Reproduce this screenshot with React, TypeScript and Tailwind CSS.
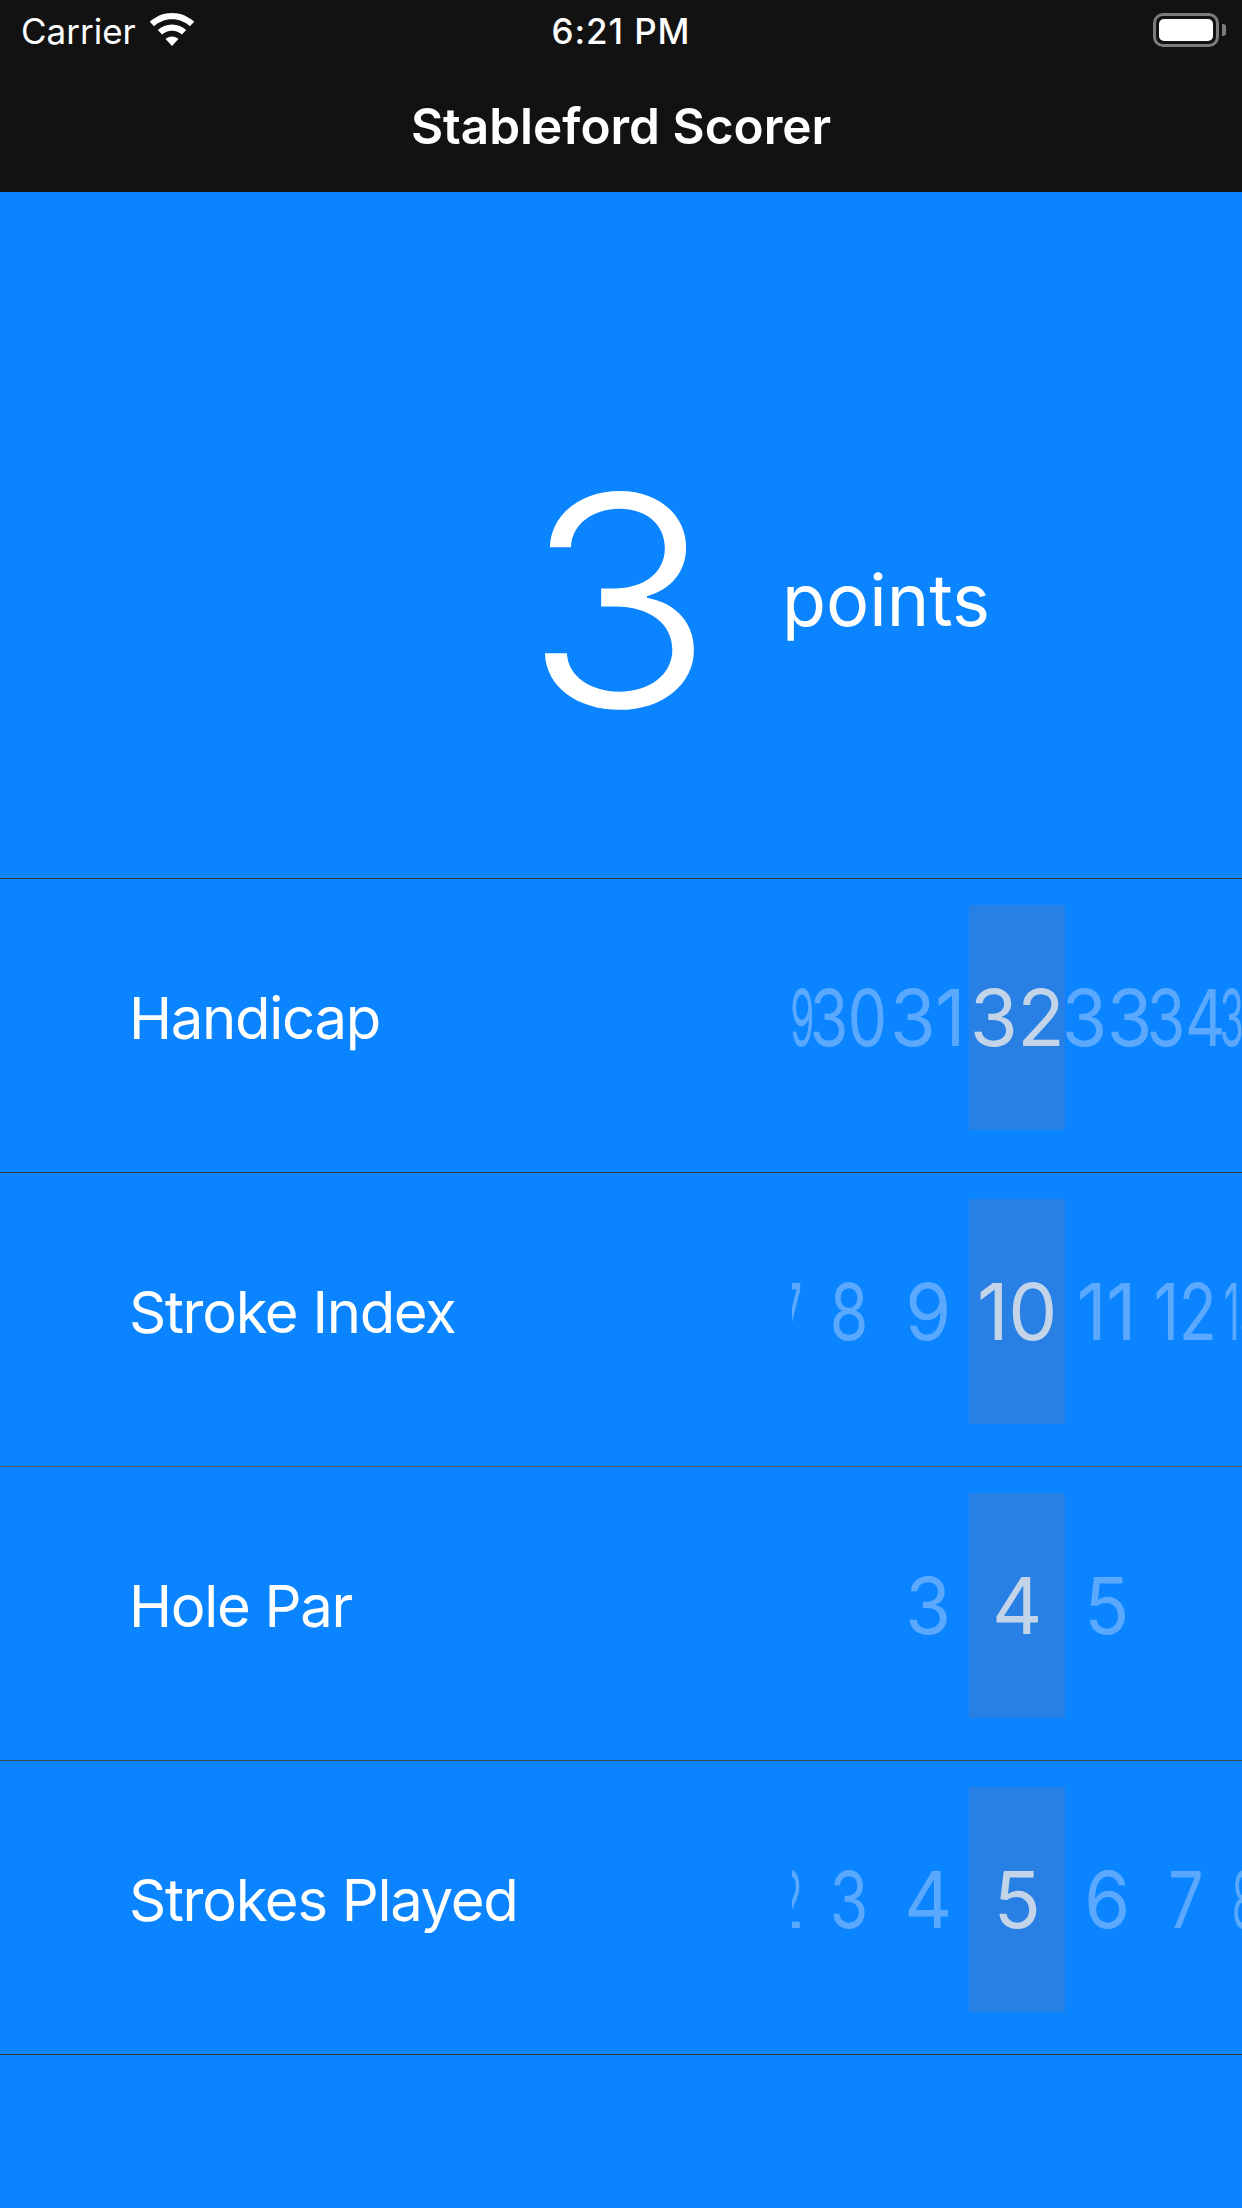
import React from "react";

function Wheel({ values }: { values: string[] }) {
  const widths = ["w-[41px]", "w-[75px]", "w-[83px]", "w-[96px]", "w-[83px]", "w-[75px]", "w-[41px]"];
  const scales = ["scale-x-[0.5]", "scale-x-[0.8]", "scale-x-[0.95]", "scale-x-100", "scale-x-[0.95]", "scale-x-[0.8]", "scale-x-[0.5]"];
  return (
    <div className="ml-auto w-[450px] overflow-hidden">
      <div className="-ml-[22px] flex items-center">
        {values.map((v, i) => (
          <div
            key={i}
            className={`${widths[i]} flex h-[225px] shrink-0 items-center justify-center ${i === 3 ? "bg-[#2880e4] text-[#c4d4e8]" : "text-[#5aa9ff]"}`}
          >
            <span className={`${scales[i]} block whitespace-nowrap text-[78px] leading-none font-normal tracking-[-0.5px]`}>{v}</span>
          </div>
        ))}
      </div>
    </div>
  );
}

function Row({ label, values, line }: { label: string; values: string[]; line: string }) {
  return (
    <div className={`flex h-[294px] items-center border-b pb-[16px] pl-[129px] ${line}`}>
      <div className="text-[58px] leading-none font-normal tracking-[-1.3px] text-white">{label}</div>
      <Wheel values={values} />
    </div>
  );
}

export default function App() {
  return (
    <div className="flex h-[2208px] w-[1242px] flex-col overflow-hidden bg-[#0a84ff] font-['Inter',sans-serif]">
      <div className="h-[192px] bg-[#121212] text-white">
        <div className="relative flex h-[60px] items-center pl-[21px] pt-[2px]">
          <span className="text-[35px] leading-none">Carrier</span>
          <svg className="ml-[13px] -mt-[3px]" width="46" height="34" viewBox="0 0 46 34" fill="#fff">
            <path d="M23 0c8.600 0 16.400 3.400 22.200 8.800l-4.300 4.500C36.300 9 30 6.300 23 6.300S9.700 9 5.100 13.300L.8 8.800C6.600 3.400 14.400 0 23 0z" />
            <path d="M23 11.500c5.500 0 10.500 2.100 14.200 5.600l-4.300 4.500C30.300 19.200 26.800 17.800 23 17.800s-7.300 1.400-9.900 3.800l-4.300-4.500c3.700-3.500 8.700-5.600 14.200-5.600z" />
            <path d="M23 23.500c2.500 0 4.700 1 6.400 2.500L23 33l-6.400-7c1.700-1.500 3.900-2.500 6.400-2.500z" />
          </svg>
          <span className="absolute left-0 right-0 text-center text-[35px] leading-none font-medium tracking-[0.9px]">6:21 PM</span>
          <div className="absolute left-[1153px] top-[13px] h-[34px] w-[66px] rounded-[10px] border-[3px] border-[#7c7c7c] p-[3px]">
            <div className="h-full w-full rounded-[5px] bg-white" />
          </div>
          <div className="absolute left-[1222px] top-[24px] h-[12px] w-[4px] rounded-r-[3px] bg-[#7c7c7c]" />
        </div>
        <div className="flex h-[132px] items-center justify-center text-[49.5px] font-semibold">
          Stableford Scorer
        </div>
      </div>
      <div className="flex h-[687px] items-center border-b border-[#333a42] pt-[130px] text-white">
        <div className="w-[524px]" />
        <div className="w-[258px] origin-left scale-x-[1.07] text-[293px] leading-none font-[350]">3</div>
        <div className="text-[72px] leading-none font-normal">points</div>
      </div>
      <Row line="border-[#333a42]" label="Handicap" values={["29", "30", "31", "32", "33", "34", "35"]} />
      <Row line="border-[#4f5a6a]" label="Stroke Index" values={["7", "8", "9", "10", "11", "12", "13"]} />
      <Row line="border-[#3f4a58]" label="Hole Par" values={["", "", "3", "4", "5", "", ""]} />
      <Row line="border-[#333a42]" label="Strokes Played" values={["2", "3", "4", "5", "6", "7", "8"]} />
    </div>
  );
}
